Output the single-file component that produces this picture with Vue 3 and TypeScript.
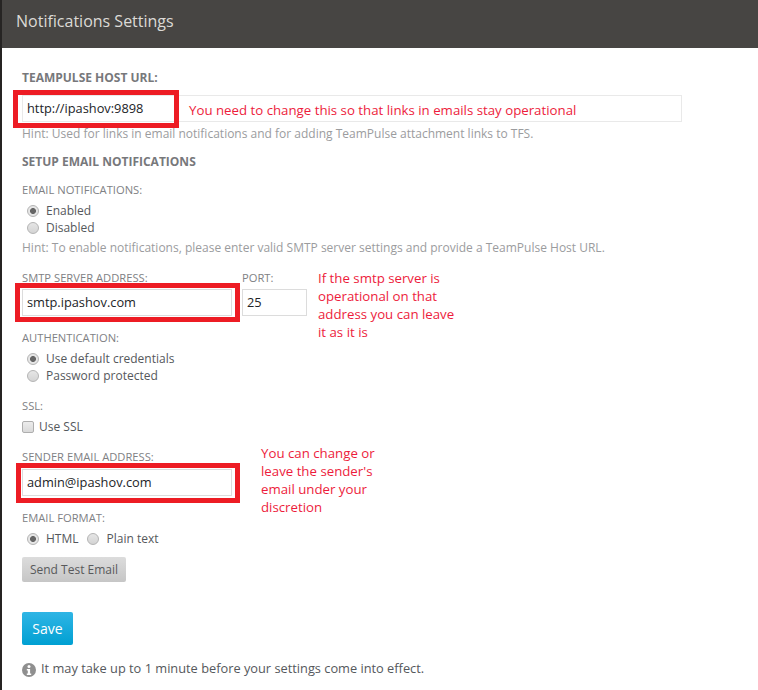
<script setup lang="ts">
const hostUrl = 'http://ipashov:9898'
const smtpNote = ['If the smtp server is', 'operational on that', 'address you can leave', 'it as it is']
const senderNote = ['You can change or', "leave the sender's", 'email under your', 'discretion']
</script>

<template>
  <div class="page">
    <span class="edge-notch"></span>
    <header class="head">Notifications Settings</header>
    <main class="form">
      <h3 class="heading first">TEAMPULSE HOST URL:</h3>
      <div class="field host">
        <input class="input wide" :value="hostUrl" readonly />
        <span class="mark mark-host"></span>
        <span class="note note-host">You need to change this so that links in emails stay operational</span>
      </div>
      <p class="hint h1">Hint: Used for links in email notifications and for adding TeamPulse attachment links to TFS.</p>
      <h3 class="heading second">SETUP EMAIL NOTIFICATIONS</h3>
      <div class="label l-notif">EMAIL NOTIFICATIONS:</div>
      <div class="options">
        <label class="opt"><span class="radio on"></span>Enabled</label>
        <label class="opt"><span class="radio"></span>Disabled</label>
      </div>
      <p class="hint h2">Hint: To enable notifications, please enter valid SMTP server settings and provide a TeamPulse Host URL.</p>

      <div class="smtp">
        <div class="col">
          <div class="label">SMTP SERVER ADDRESS:</div>
          <div class="field">
            <input class="input addr" value="smtp.ipashov.com" readonly />
            <span class="mark mark-smtp"></span>
          </div>
        </div>
        <div class="col">
          <div class="label">PORT:</div>
          <input class="input port" value="25" readonly />
        </div>
        <div class="note note-smtp">
          <div v-for="line in smtpNote" :key="line">{{ line }}</div>
        </div>
      </div>

      <div class="label l-auth">AUTHENTICATION:</div>
      <div class="options">
        <label class="opt"><span class="radio on"></span>Use default credentials</label>
        <label class="opt"><span class="radio"></span>Password protected</label>
      </div>

      <div class="label l-ssl">SSL:</div>
      <label class="check-row"><span class="check"></span>Use SSL</label>

      <div class="sender">
        <div class="label">SENDER EMAIL ADDRESS:</div>
        <div class="field">
          <input class="input addr" value="admin@ipashov.com" readonly />
          <span class="mark mark-sender"></span>
        </div>
        <div class="note note-sender">
          <div v-for="line in senderNote" :key="line">{{ line }}</div>
        </div>
      </div>

      <div class="label l-format">EMAIL FORMAT:</div>
      <div class="inline-opts">
        <label class="opt"><span class="radio on"></span>HTML</label>
        <label class="opt"><span class="radio"></span>Plain text</label>
      </div>

      <button class="btn-test" type="button">Send Test Email</button>
      <button class="btn-save" type="button">Save</button>

      <p class="info">
        <svg class="info-icon" viewBox="0 0 14 14" width="14" height="14" aria-hidden="true">
          <circle cx="7" cy="7" r="7" fill="#8f8f8f" />
          <circle cx="7" cy="3.5" r="1.5" fill="#fff" />
          <path d="M4.8 6h3.3v4.6h1.1v1.4H4.8v-1.4h1V7.4h-1z" fill="#fff" />
        </svg>
        It may take up to 1 minute before your settings come into effect.
      </p>
    </main>
  </div>
</template>

<style>
html, body { margin: 0; background: #fff; }
</style>

<style scoped>
.page {
  position: relative;
  width: 758px;
  height: 690px;
  overflow: hidden;
  box-sizing: border-box;
  background: #fff;
  font-family: "Open Sans", sans-serif;
  border-left: 2px solid #262423;
}
.edge-notch {
  position: absolute;
  left: -2px;
  top: 306px;
  width: 2px;
  height: 11px;
  background: #fff;
}
.head {
  height: 48px;
  box-sizing: border-box;
  padding: 10px 0 0 14px;
  background: #474543;
  color: #dcdad6;
  font-size: 16px;
  line-height: 22px;
}
.form { padding-left: 20px; }
.heading {
  margin: 0;
  font-size: 12px;
  line-height: 16px;
  font-weight: 700;
  color: #77787b;
}
.first { padding-top: 22px; }
.second { margin-top: 12px; }
.field { position: relative; width: max-content; }
.host { margin-top: 9px; }
.input {
  display: block;
  box-sizing: border-box;
  height: 27px;
  padding: 0 4px 2px;
  border: 1px solid #dcdcdc;
  background: #fff;
  color: #222427;
  font: 12.8px/23px "Open Sans", sans-serif;
  outline: none;
}
.wide { width: 660px; border-color: #e9e9e9; }
.addr { width: 210px; }
.port { width: 65px; }
.mark {
  position: absolute;
  box-sizing: border-box;
  border: 5px solid #ed1c24;
  pointer-events: none;
}
.mark-host { left: -9px; top: -5px; width: 166px; height: 38px; }
.mark-smtp { left: -7px; top: -6px; width: 225px; height: 39px; }
.mark-sender { left: -6px; top: -6px; width: 224px; height: 40px; }
.note {
  position: absolute;
  color: #ed1c3c;
  font-size: 13.25px;
  line-height: 18px;
  white-space: nowrap;
}
.note-host { left: 167px; top: 6px; }
.note-smtp { left: 296px; top: -2px; }
.note-sender { left: 239px; top: -6px; }
.hint {
  margin: 0;
  font-size: 12px;
  line-height: 16px;
  color: #9b9c9e;
  white-space: nowrap;
}
.h1 { margin-top: 4px; }
.h2 { margin-top: 4px; }
.label {
  font-size: 11.2px;
  line-height: 14px;
  color: #808184;
  white-space: nowrap;
}
.l-notif { margin-top: 13px; }
.options { margin-top: 5px; }
.opt {
  display: flex;
  align-items: center;
  height: 17px;
  padding-left: 5px;
  font-size: 12px;
  color: #55585c;
  white-space: nowrap;
}
.radio {
  box-sizing: border-box;
  width: 12px;
  height: 12px;
  margin-right: 7px;
  border: 1px solid #b4b4b4;
  border-radius: 50%;
  background: linear-gradient(#e6e6e6, #d4d4d4);
  flex: none;
}
.radio.on { background: radial-gradient(circle, #666 0 2.7px, #e6e6e6 3.2px); }
.smtp {
  position: relative;
  display: flex;
  gap: 10px;
  margin-top: 15px;
}
.col { display: flex; flex-direction: column; gap: 4px; }
.l-auth { margin-top: 15px; }
.l-ssl { margin-top: 15px; }
.check-row {
  display: flex;
  align-items: center;
  height: 17px;
  margin-top: 5px;
  font-size: 12px;
  color: #55585c;
}
.check {
  box-sizing: border-box;
  width: 12px;
  height: 12px;
  margin-right: 5px;
  border: 1px solid #aeaeae;
  border-radius: 2px;
  background: linear-gradient(#ececec, #d9d9d9);
}
.sender {
  position: relative;
  display: flex;
  flex-direction: column;
  gap: 5px;
  margin-top: 15px;
}
.l-format { margin-top: 15px; }
.inline-opts { display: flex; gap: 4px; margin-top: 5px; }
.inline-opts .opt + .opt { padding-left: 4px; }
.inline-opts .opt + .opt .radio { margin-right: 8px; }
.btn-test {
  display: block;
  width: 104px;
  height: 25px;
  margin-top: 10px;
  padding: 0;
  border: none;
  border-radius: 2px;
  background: linear-gradient(#dcdcdc, #c6c6c6);
  color: #58595b;
  font: 12px "Open Sans", sans-serif;
}
.btn-save {
  display: block;
  width: 51px;
  height: 33px;
  margin-top: 30px;
  padding: 0;
  border: none;
  border-radius: 2px;
  background: linear-gradient(#2fb5e5, #00a0d2);
  color: #fff;
  font: 14px "Open Sans", sans-serif;
}
.info {
  display: flex;
  align-items: center;
  gap: 5px;
  margin: 14px 0 0;
  height: 18px;
  font-size: 12.8px;
  color: #55585c;
  white-space: nowrap;
}
.info-icon { flex: none; margin-top: 3px; }
</style>
